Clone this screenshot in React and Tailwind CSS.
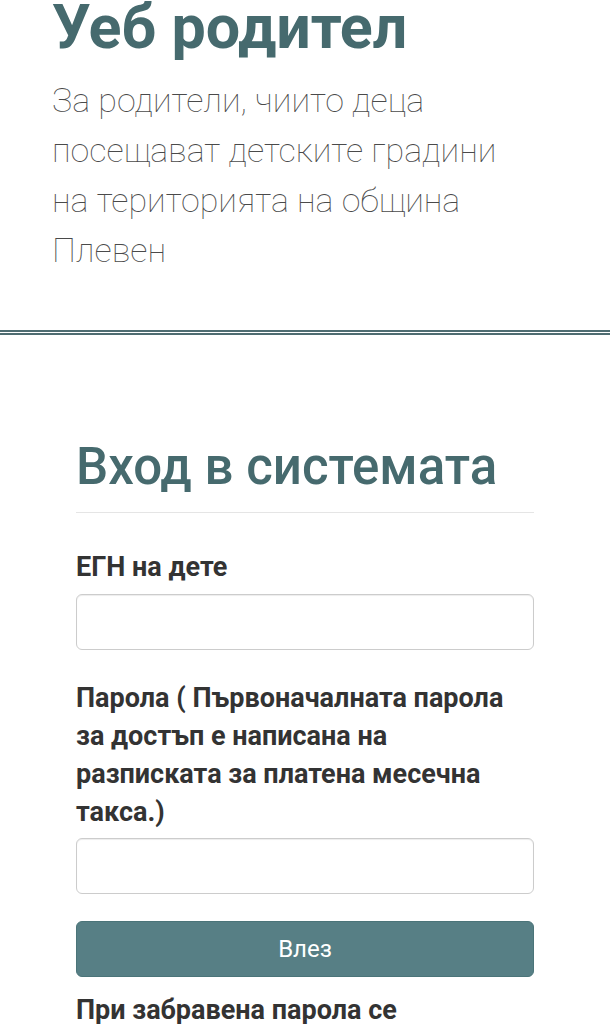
export default function App() {
  return (
    <div className="min-h-screen bg-white font-['Roboto','Liberation_Sans',sans-serif]">
      {/* ── Header ───────────────────────────────────────────── */}
      <header className="pl-[52px] pr-[70px] pb-[55px]">
        <h1 className="text-[61px] leading-[55px] font-bold text-[#466a6e]">Уеб родител</h1>
        <p className="mt-[20px] text-[34px] leading-[50px] font-thin text-[#4a4a4a]">
          За родители, чиито деца посещават детските градини на територията на община Плевен
        </p>
      </header>

      <div className="h-[2px] bg-[#4e6c71]" />
      <div className="mt-[1px] h-[2px] bg-[#4e6c71]" />

      {/* ── Login form ───────────────────────────────────────── */}
      <main className="px-[76px] pt-[104px] pb-10">
        <h2 className="text-[51px] leading-[56px] font-medium text-[#466a6e]">Вход в системата</h2>
        <hr className="mt-[17px] border-0 border-t border-[#e5e5e5]" />

        <form className="mt-[35px]" onSubmit={e => e.preventDefault()}>
          <label className="block text-[27px] leading-[38px] font-bold text-[#333333]">ЕГН на дете</label>
          <input
            type="text"
            className="mt-[8px] block w-full h-[56px] rounded-md border border-[#cccccc] shadow-[inset_0_1px_1px_rgba(0,0,0,0.075)] px-3 text-[24px] outline-none"
          />

          <label className="mt-[29px] block text-[27px] leading-[38px] font-bold text-[#333333]">
            Парола ( Първоначалната парола за достъп е написана на разписката за платена месечна такса.)
          </label>
          <input
            type="password"
            className="mt-[7px] block w-full h-[56px] rounded-md border border-[#cccccc] shadow-[inset_0_1px_1px_rgba(0,0,0,0.075)] px-3 text-[24px] outline-none"
          />

          <button
            type="submit"
            className="mt-[27px] block w-full h-[56px] rounded-md border border-[#4b7479] bg-[#577f85] text-white text-[24px]"
          >
            Влез
          </button>
        </form>

        <p className="mt-[14px] text-[27px] leading-[38px] font-bold text-[#333333]">
          При забравена парола се обръщайте към детската градина.
        </p>
      </main>
    </div>
  )
}
